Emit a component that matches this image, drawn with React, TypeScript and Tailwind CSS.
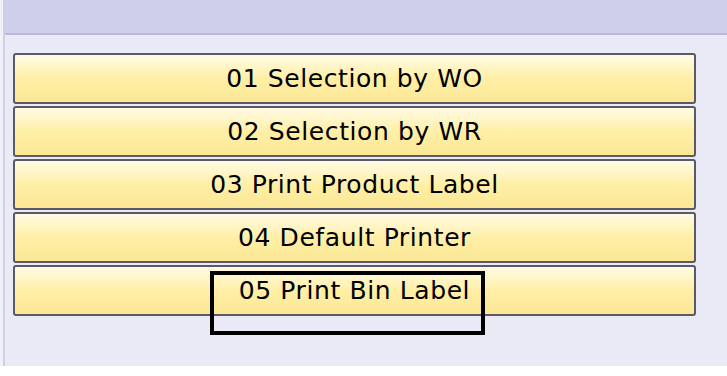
import React from "react";

const items = [
  "01 Selection by WO",
  "02 Selection by WR",
  "03 Print Product Label",
  "04 Default Printer",
  "05 Print Bin Label",
];

export default function App() {
  return (
    <div className="relative w-[727px] h-[376px] bg-white overflow-hidden" style={{ fontFamily: "'DejaVu Sans', Verdana, sans-serif" }}>
      <div className="h-[366px] flex flex-col pl-[3px] bg-[#f0f0f8]">
        <div className="flex-1 flex flex-col border-l-2 border-[#d0d0e4]">
          <div className="h-[35px] bg-[#cecfeb] border-b-2 border-[#babad8]" />
          <div className="flex-1 bg-[#eaeaf6] pt-[18px] pl-[8px] pr-[31px] flex flex-col gap-[2px]">
            {items.map((t) => (
              <div
                key={t}
                className="h-[51px] rounded-[3px] border-2 border-[#5a5a66] bg-gradient-to-b from-[#fffbe4] via-[#ffefa6] to-[#fbe795] flex items-center justify-center text-[25px] tracking-[0.6px] text-black"
              >
                {t}
              </div>
            ))}
          </div>
        </div>
      </div>
      <div className="absolute left-[210px] top-[271px] w-[275px] h-[64px] border-4 border-black" />
    </div>
  );
}
